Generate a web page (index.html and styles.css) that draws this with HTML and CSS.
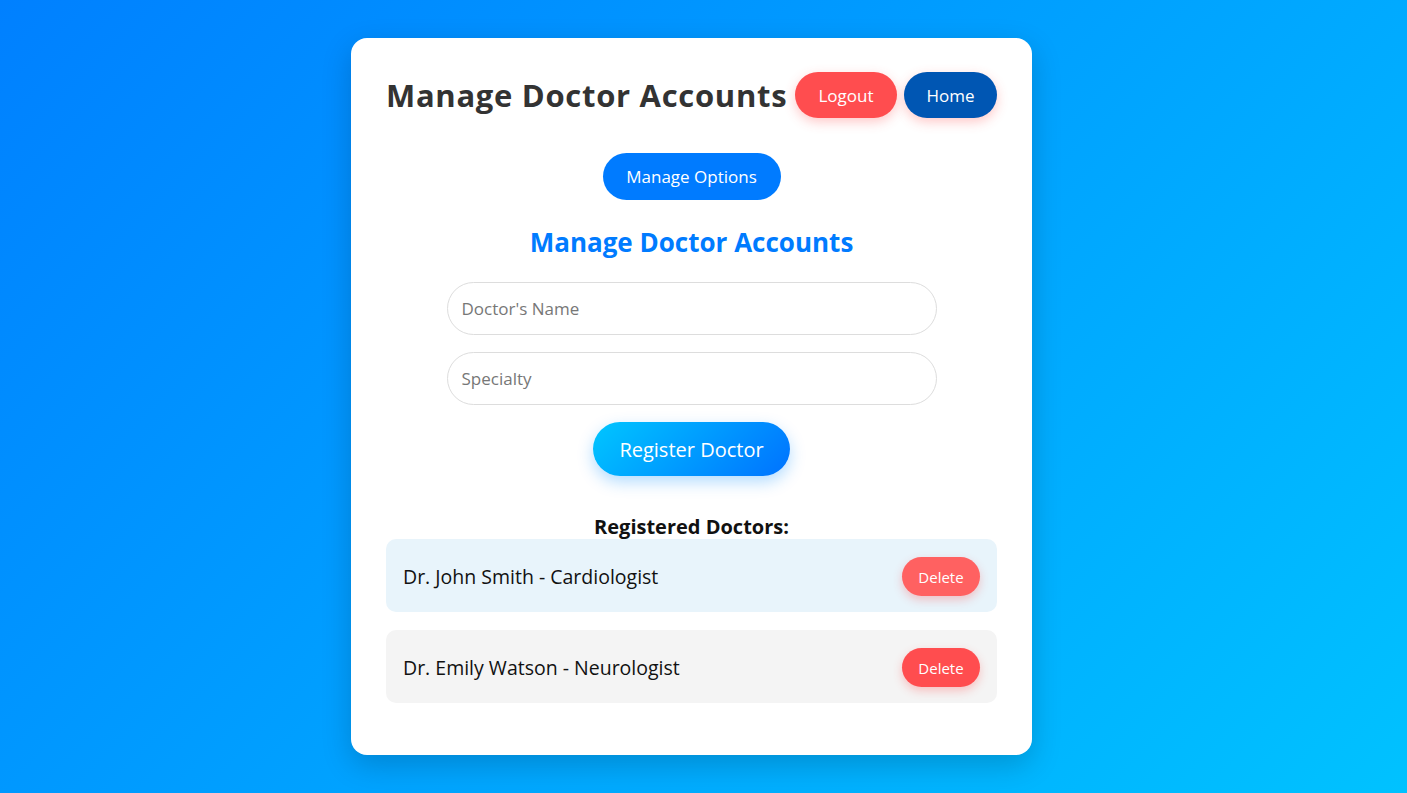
FILE: index.html
```html
<!DOCTYPE html>
<html lang="en">
<head>
<meta charset="utf-8">
<title>Manage Doctor Accounts</title>
<link rel="stylesheet" href="styles.css">
</head>
<body>
<div class="card">
  <header class="header">
    <h1 class="title">Manage Doctor Accounts</h1>
    <div class="nav">
      <button class="btn btn-logout">Logout</button>
      <button class="btn btn-home">Home</button>
    </div>
  </header>
  <div class="options-row">
    <button class="btn btn-options">Manage Options</button>
  </div>
  <h2 class="subtitle">Manage Doctor Accounts</h2>
  <form class="form">
    <input class="field" type="text" placeholder="Doctor's Name">
    <input class="field" type="text" placeholder="Specialty">
    <button type="button" class="btn btn-register">Register Doctor</button>
  </form>
  <h3 class="list-title">Registered Doctors:</h3>
  <ul class="list">
    <li class="item item-active"><span>Dr. John Smith - Cardiologist</span><button class="btn btn-delete btn-delete-hover">Delete</button></li>
    <li class="item"><span>Dr. Emily Watson - Neurologist</span><button class="btn btn-delete">Delete</button></li>
  </ul>
</div>
</body>
</html>
```

FILE: styles.css
```css
* { box-sizing: border-box; }
html, body { margin: 0; height: 100%; }
body {
  font-family: "Open Sans", "Noto Sans", sans-serif;
  background: linear-gradient(135deg, #0080ff 0%, #00c2ff 100%);
  display: flex;
  align-items: center;
  justify-content: center;
  padding-right: 24px;
}
.card {
  width: 681px;
  height: 717px;
  background: #fff;
  border-radius: 16px;
  padding: 34px 35px;
  box-shadow: 0 10px 30px rgba(0, 0, 0, 0.18);
}
.header {
  display: flex;
  align-items: center;
  justify-content: space-between;
  height: 46px;
}
.title {
  margin: 0;
  font-size: 31px;
  font-weight: 700;
  color: #333;
  letter-spacing: 0.7px;
}
.nav { display: flex; gap: 7px; }
.btn {
  border: none;
  border-radius: 999px;
  color: #fff;
  font-family: inherit;
  cursor: pointer;
}
.btn-logout, .btn-home {
  height: 46px;
  font-size: 17px;
  box-shadow: 0 4px 12px rgba(255, 77, 77, 0.3);
}
.btn-logout { width: 102px; background: #ff4d4f; }
.btn-home { width: 93px; background: #0056b3; }
.options-row { display: flex; justify-content: center; margin-top: 35px; }
.btn-options {
  width: 178px;
  height: 47px;
  background: #007bff;
  font-size: 17px;
}
.subtitle {
  margin: 25px 0 0;
  text-align: center;
  color: #007bff;
  font-size: 26px;
  font-weight: 700;
  line-height: 34px;
}
.form {
  display: flex;
  flex-direction: column;
  align-items: center;
  gap: 17px;
  margin-top: 23px;
}
.field {
  width: 490px;
  height: 53px;
  border: 1px solid #ddd;
  border-radius: 999px;
  padding: 0 14px;
  font-family: inherit;
  font-size: 17px;
  color: #333;
  outline: none;
}
.field::placeholder { color: #777; }
.btn-register {
  width: 197px;
  height: 54px;
  background: linear-gradient(135deg, #00c6ff, #0072ff);
  font-size: 20px;
  box-shadow: 0 6px 16px rgba(0, 140, 255, 0.3);
}
.list-title {
  margin: 39px 0 0;
  text-align: center;
  font-size: 20px;
  font-weight: 700;
  color: #111;
  line-height: 24px;
}
.list {
  list-style: none;
  margin: 0;
  padding: 0;
  display: flex;
  flex-direction: column;
  gap: 18px;
}
.item {
  display: flex;
  align-items: center;
  justify-content: space-between;
  height: 73px;
  padding: 2px 17px 0;
  border-radius: 10px;
  background: #f4f4f4;
  font-size: 19.5px;
  color: #111;
}
.item-active { background: #e8f4fb; }
.btn-delete {
  width: 78px;
  height: 39px;
  background: #ff4d4f;
  font-size: 15px;
  box-shadow: 0 4px 10px rgba(255, 77, 77, 0.3);
}
.btn-delete-hover { background: #ff6161; }
```
